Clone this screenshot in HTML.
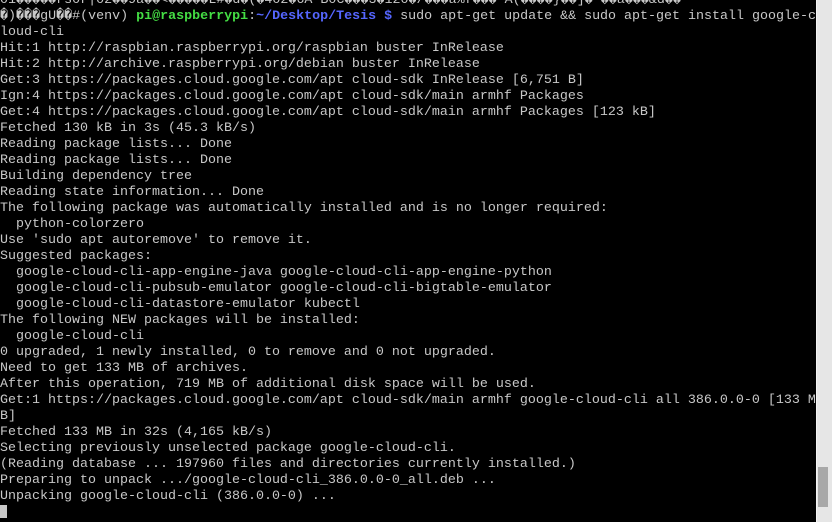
<!DOCTYPE html>
<html><head><meta charset="utf-8"><style>
html,body{margin:0;padding:0;background:#000;width:832px;height:522px;overflow:hidden}
pre{position:absolute;left:0;top:-7px;margin:0;font-family:"Liberation Mono",monospace;font-size:13.33px;line-height:16px;color:#c8c8c8;white-space:pre}
.g{color:#44dd44;font-weight:bold}.b{color:#5566ff;font-weight:bold}
#sb{position:absolute;left:816px;top:0;width:16px;height:522px;background:#e6e6e6;border-left:1px solid #f4f4f4;box-sizing:border-box}
#th{position:absolute;left:818px;top:467px;width:10px;height:40px;background:#a8a8a8}
#cur{position:absolute;left:0;top:505px;width:7px;height:13px;background:#c8c8c8}
</style></head><body>
<pre>01�����rs0r|02��9a��&lt;�����L#�d�(�402�6A B0C���3�120�/���a%f��� A(����}��]� ��a���&amp;d��
�)���gU��#(venv) <span class="g">pi@raspberrypi</span>:<span class="b">~/Desktop/Tesis $</span> sudo apt-get update &amp;&amp; sudo apt-get install google-c
loud-cli
Hit:1 http://raspbian.raspberrypi.org/raspbian buster InRelease
Hit:2 http://archive.raspberrypi.org/debian buster InRelease
Get:3 https://packages.cloud.google.com/apt cloud-sdk InRelease [6,751 B]
Ign:4 https://packages.cloud.google.com/apt cloud-sdk/main armhf Packages
Get:4 https://packages.cloud.google.com/apt cloud-sdk/main armhf Packages [123 kB]
Fetched 130 kB in 3s (45.3 kB/s)
Reading package lists... Done
Reading package lists... Done
Building dependency tree
Reading state information... Done
The following package was automatically installed and is no longer required:
  python-colorzero
Use 'sudo apt autoremove' to remove it.
Suggested packages:
  google-cloud-cli-app-engine-java google-cloud-cli-app-engine-python
  google-cloud-cli-pubsub-emulator google-cloud-cli-bigtable-emulator
  google-cloud-cli-datastore-emulator kubectl
The following NEW packages will be installed:
  google-cloud-cli
0 upgraded, 1 newly installed, 0 to remove and 0 not upgraded.
Need to get 133 MB of archives.
After this operation, 719 MB of additional disk space will be used.
Get:1 https://packages.cloud.google.com/apt cloud-sdk/main armhf google-cloud-cli all 386.0.0-0 [133 M
B]
Fetched 133 MB in 32s (4,165 kB/s)
Selecting previously unselected package google-cloud-cli.
(Reading database ... 197960 files and directories currently installed.)
Preparing to unpack .../google-cloud-cli_386.0.0-0_all.deb ...
Unpacking google-cloud-cli (386.0.0-0) ...
</pre>
<div id="cur"></div>
<div id="sb"></div><div id="th"></div>
</body></html>
